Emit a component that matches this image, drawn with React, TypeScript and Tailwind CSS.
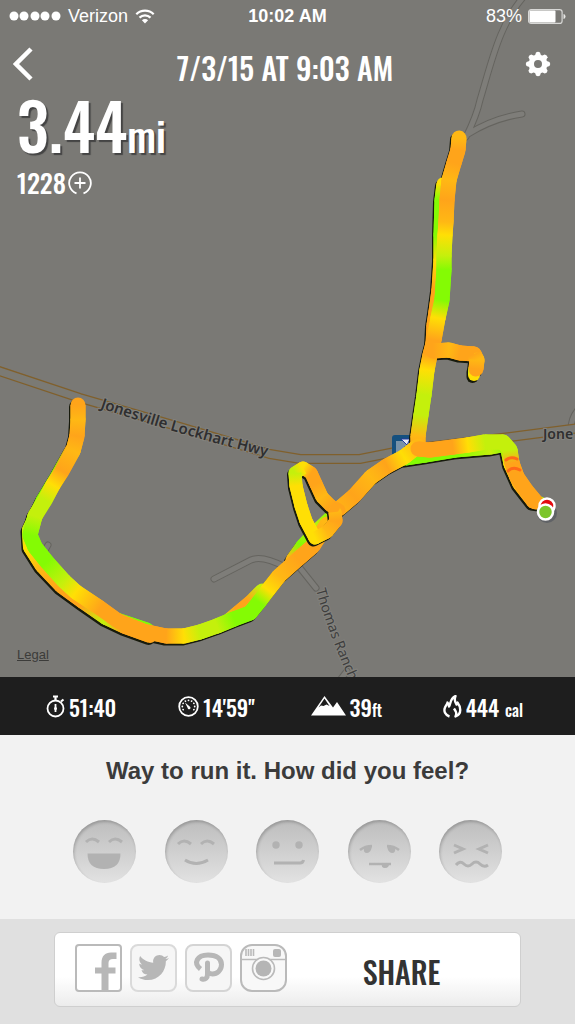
import { FaTwitter } from "react-icons/fa";
import type { ReactNode } from "react";

const CONDENSED = "font-['Oswald','Liberation_Sans_Narrow','Roboto_Condensed','Open_Sans_Condensed','DejaVu_Sans_Condensed',sans-serif]";

const O = "#ffa41a";
const A = "#ffb814";
const Y = "#ffdf05";
const L = "#c4f00c";
const G = "#84fb04";

type Point = [number, number, string];

type Track = { width: number; shadow?: boolean; points: Point[] };

const outbound: Track[] = [
  {
    width: 13,
    shadow: true,
    points: [[443, 184, Y], [441, 200, G], [440, 235, G], [440, 260, Y], [438, 290, O], [435, 312, O], [433, 325, O], [432, 345, O], [427, 368, A]],
  },
  { width: 12, shadow: true, points: [[474, 370, L], [474, 375, Y]] },
  {
    width: 13,
    shadow: true,
    points: [[405, 459, G], [425, 456, G], [455, 451, G], [490, 448, L], [506, 445, G], [510, 464, Y], [519, 484, A], [533, 502, O], [540, 503, L]],
  },
  {
    width: 14,
    shadow: true,
    points: [[72, 450, O], [58, 475, G], [43, 500, G], [29, 530, L], [30, 547, Y], [42, 566, A], [61, 586, O], [83, 602, O], [106, 618, L], [125, 627, O], [150, 636, O]],
  },
  { width: 12, points: [[118, 619, G], [148, 629, G]] },
  { width: 13, shadow: true, points: [[225, 623, L], [238, 612, O], [250, 602, O], [262, 590, L]] },
  { width: 13, shadow: true, points: [[334, 514, G], [317, 530, L], [302, 546, G], [292, 560, A]] },
];

const inbound: Track[] = [
  {
    width: 15,
    shadow: true,
    points: [[459, 138, A], [458, 150, O], [454, 163, O], [449, 180, A], [447, 200, O], [446, 222, A], [445, 235, Y], [444, 256, L], [444, 270, G], [442, 300, G], [438, 318, Y], [434, 340, O], [430, 355, O], [427, 370, Y], [424, 395, L], [421, 415, L], [418, 436, A], [418, 447, O]],
  },
  {
    width: 15,
    shadow: true,
    points: [[433, 351, O], [449, 350, A], [460, 353, O], [474, 354, O], [477, 360, A], [476, 369, O]],
  },
  {
    width: 15,
    shadow: true,
    points: [[334, 513, A], [354, 496, O], [371, 477, A], [387, 466, O], [404, 457, Y], [418, 446, A]],
  },
  {
    width: 15,
    points: [[418, 449, O], [430, 450, O], [453, 447, O], [468, 445, Y], [485, 442, L], [503, 442, L], [510, 450, L], [512, 463, O], [517, 477, O], [526, 490, O], [536, 502, O]],
  },
  {
    width: 15,
    shadow: true,
    points: [[327, 524, A], [313, 546, O], [298, 559, O], [279, 576, A], [268, 590, Y], [259, 602, G], [250, 613, G], [234, 619, G], [217, 626, L], [200, 632, L], [184, 636, Y], [166, 636, O], [143, 631, O], [118, 621, O], [100, 608, O], [76, 592, Y], [64, 581, L], [47, 562, G], [35, 547, G], [30, 535, G], [35, 516, L], [45, 500, L], [53, 485, Y], [62, 471, O], [73, 451, A], [77, 436, O], [78, 420, A], [78, 405, O]],
  },
];

const sideLoop: Track[] = [
  {
    width: 13,
    shadow: true,
    points: [[339, 510, O], [331, 506, O], [322, 497, A], [316, 484, O], [311, 473, O], [303, 468, Y], [295, 473, L], [296, 486, Y], [301, 506, Y], [306, 521, Y], [315, 538, Y], [327, 532, A], [336, 521, O], [335, 512, A]],
  },
];

function TrackGroup({ name, tracks }: { name: string; tracks: Track[] }) {
  return (
    <g>
      {tracks
        .filter((track) => track.shadow)
        .map((track, t) => (
          <polyline
            key={t}
            points={track.points.map(([x, y]) => `${x - 1.5},${y + 2}`).join(" ")}
            stroke="#171a0c"
            strokeWidth={track.width}
          />
        ))}
      {tracks.map((track, t) => {
        const legs = track.points.slice(1).map(([x, y, color], i) => {
          const [px, py, previous] = track.points[i];
          return { id: `${name}-${t}-${i}`, x, y, px, py, color, previous };
        });
        return (
          <g key={t}>
            {legs.map(({ id, x, y, px, py, color, previous }) => (
              <g key={id}>
                <linearGradient id={id} gradientUnits="userSpaceOnUse" x1={px} y1={py} x2={x} y2={y}>
                  <stop offset="0" stopColor={previous} />
                  <stop offset="1" stopColor={color} />
                </linearGradient>
                <path d={`M${px} ${py}L${x} ${y}`} stroke={`url(#${id})`} strokeWidth={track.width} />
              </g>
            ))}
            {legs.map(({ id, x, y, px, py }) => (
              <path
                key={id}
                d={`M${px} ${py}L${x} ${y}`}
                stroke={`url(#${id})`}
                strokeWidth={track.width}
                strokeLinecap="butt"
              />
            ))}
          </g>
        );
      })}
    </g>
  );
}

function Route() {
  return (
    <g fill="none" strokeLinecap="round" strokeLinejoin="round">
      <TrackGroup name="route" tracks={[...outbound, ...inbound]} />
      <TrackGroup name="loop" tracks={sideLoop} />
      <path d="M506 460q5-4 11-1M508 471q5-5 12-1" stroke="#ff6a18" strokeWidth="3" />
    </g>
  );
}

const lanes = [
  "M526-6C500 22 492 60 480 100C477 114 473 123 466 137",
  "M468 134Q494 118 522 114",
  "M214 579L251 560Q262 555 285 567M300 568L316 588",
  "M43 554L48 545",
  "M337 684L347 671",
  "M578 410Q571 418 571 430",
];

function RouteMap() {
  return (
    <svg
      className="absolute inset-0 h-full w-full"
      viewBox="0 0 575 677"
      preserveAspectRatio="xMidYMid slice"
      role="img"
      aria-label="Map of the run"
    >
      <defs>
        <path id="highway-label" d="M100 408Q185 437 290 462" />
        <path id="ranch-label" d="M316 590Q326 628 358 700" />
      </defs>
      <g fill="none" strokeLinecap="round">
        <path d={lanes.join("")} stroke="#65645f" strokeWidth="7" />
        <path d={lanes.join("")} stroke="#7e7d79" strokeWidth="5" />
      </g>
      <g fill="none">
        <path d="M-4 370L80 398L180 427L270 454L300 459H360L410 449L510 437L580 428" stroke="#80602c" strokeWidth="10" />
        <path d="M-4 370L80 398L180 427L270 454L300 459H360L410 449L510 437L580 428" stroke="#7b7a74" strokeWidth="7.500" />
      </g>
      <rect x="392" y="435" width="30" height="28" rx="3" fill="#15507f" />
      <path d="M396 441h16v20h-16z" fill="#7892a8" />
      <path d="M401 439h9l-3 6zM405 446v7" fill="#e8ecf4" stroke="#2439a0" />
      <g className="font-['Noto_Sans',sans-serif]" stroke="#83827d" strokeWidth="2" paintOrder="stroke">
        <text fontSize="15" fontWeight="600" fill="#2f2f30">
          <textPath href="#highway-label">Jonesville Lockhart Hwy</textPath>
        </text>
        <text x="543" y="439" fontSize="14" fontWeight="600" fill="#2f2f30">
          Jone
        </text>
        <text fontSize="14" fill="#3e3e3d">
          <textPath href="#ranch-label">Thomas Ranch</textPath>
        </text>
      </g>
      <Route />
      <circle cx="547" cy="513" r="10" fill="#30384a" opacity=".35" />
      <circle cx="547" cy="506" r="7.500" fill="#e30b10" stroke="#fff" strokeWidth="2.500" />
      <circle cx="545.500" cy="512" r="7.500" fill="#7cc52b" stroke="#fff" strokeWidth="2.500" />
    </svg>
  );
}

function StatusBar() {
  return (
    <div className="grid h-8 grid-cols-3 items-center px-[9px] text-lg font-['Liberation_Sans',sans-serif]">
      <div className="flex items-center gap-[7px]">
        <svg width="52" height="10" viewBox="0 0 52 10" fill="#fff" aria-hidden="true">
          {[5, 15, 26, 36, 47].map((x) => (
            <circle key={x} cx={x} cy="5" r="4.500" />
          ))}
        </svg>
        <span>Verizon</span>
        <svg width="20" height="15" viewBox="0 0 19 15" fill="none" stroke="#fff" strokeWidth="2.200" aria-hidden="true">
          <path d="M.8 5.300a12.300 12.300 0 0 1 17.400 0M4 8.600a7.800 7.800 0 0 1 11 0" />
          <path d="M9.500 14.500L6.400 11.300a4.400 4.400 0 0 1 6.200 0z" fill="#fff" stroke="none" />
        </svg>
      </div>
      <div className="text-center font-bold">10:02 AM</div>
      <div className="flex items-center justify-end gap-[6px]">
        <span>83%</span>
        <svg width="38" height="15" viewBox="0 0 38 15" aria-hidden="true">
          <rect x=".6" y=".6" width="33.500" height="13.800" rx="2.500" fill="none" stroke="#d8d8d6" strokeWidth="1.200" />
          <rect x="1.500" y="1.500" width="26" height="12" rx="1" fill="#fff" />
          <path d="M35.500 5q2 .4 2 2.500t-2 2.500z" fill="#e8e8e6" />
        </svg>
      </div>
    </div>
  );
}

function GearIcon() {
  return (
    <svg width="26" height="26" viewBox="-13 -13 26 26" aria-hidden="true">
      <circle r="6.700" fill="none" stroke="#fff" strokeWidth="5.400" />
      {[0, 45, 90, 135, 180, 225, 270, 315].map((angle) => (
        <path key={angle} transform={`rotate(${angle})`} d="M-3.200-8L-2-11.500Q0-13 2-11.500L3.200-8z" fill="#fff" />
      ))}
    </svg>
  );
}

function Stat({ icon, value, unit }: { icon: ReactNode; value: string; unit?: ReactNode }) {
  return (
    <li className="flex items-center gap-1">
      {icon}
      <span className="whitespace-nowrap pt-[2px] text-[22px] leading-7">
        {value}
        {unit}
      </span>
    </li>
  );
}

const ticks = [-120, -90, -60, -30, 0, 30, 60, 90, 120];

function Stats() {
  return (
    <ul className={`grid h-[58px] grid-cols-4 items-center bg-[#1e1e1e] pl-[46px] font-medium text-white ${CONDENSED}`}>
      <Stat
        value="51:40"
        icon={
          <svg width="19" height="23" viewBox="0 0 19 23" fill="none" stroke="#fff" strokeWidth="1.800" aria-hidden="true">
            <circle cx="9.500" cy="13.500" r="8" />
            <path d="M7 1.500h5M9.500 1.500v4M15 6.500l2.500-2" strokeWidth="2.200" />
            <path d="M9.500 9v8" />
            <circle cx="9.500" cy="13.500" r="1.500" fill="#fff" stroke="none" />
          </svg>
        }
      />
      <Stat
        value={"14'59''"}
        icon={
          <svg width="21" height="21" viewBox="-10.500 -10.500 21 21" aria-hidden="true">
            <circle r="9.300" fill="none" stroke="#fff" strokeWidth="1.800" />
            {ticks.map((angle) => (
              <circle key={angle} transform={`rotate(${angle})`} cy="-6.200" r=".9" fill="#fff" />
            ))}
            <path d="M-3.500-4L-.8 1.500a1.400 1.400 0 1 0 2-1.400z" fill="#fff" />
          </svg>
        }
      />
      <Stat
        value="39"
        unit={<span className="text-base">ft</span>}
        icon={
          <svg width="35" height="20" viewBox="0 0 35 20" aria-hidden="true">
            <path d="M0 19.500L13.500 0L22 11.500L26 6L35 19.500z" fill="#fff" />
            <path d="M13.500 2.500L18.500 10L15.500 8.500L12.500 10L10 9.500L7.500 11.500z" fill="#1e1e1e" />
          </svg>
        }
      />
      <Stat
        value="444"
        unit={<span className="ml-[6px] text-base">cal</span>}
        icon={
          <svg width="19" height="23" viewBox="0 0 19 23" fill="none" stroke="#fff" strokeWidth="2.400" strokeLinejoin="round" aria-hidden="true">
            <path d="M6.500 21.500C2 20 .5 16 2 12.500C2.800 10.500 4.500 9 4.500 7.500C6 9 6 10.500 6 11.500C8 9 6.500 4 12.500 1C11 5 12 7.500 13.500 9.500L14.500 7.500C17.500 11.500 19.500 18.500 12.500 21.500C14 18 13 16.500 11 13.500" />
          </svg>
        }
      />
    </ul>
  );
}

const faces: { label: string; drawing: ReactNode }[] = [
  {
    label: "Great",
    drawing: (
      <>
        <path d="M13 22q6-6 13 0M36 22q6-6 13 0" />
        <path d="M14.500 33.500h33q0 15.500-16.500 15.500t-16.500-15.500z" fill="#b2b2b2" stroke="none" />
      </>
    ),
  },
  { label: "Good", drawing: <path d="M13 24q6-6 13 0M36 24q6-6 13 0M20 40q11 7 23 0" /> },
  {
    label: "So-so",
    drawing: (
      <>
        <path d="M18 43h26q3 0 3.500-3" />
        <circle cx="20" cy="25" r="3.700" fill="#b2b2b2" stroke="none" />
        <circle cx="43" cy="25" r="3.700" fill="#b2b2b2" stroke="none" />
      </>
    ),
  },
  {
    label: "Tired",
    drawing: (
      <>
        <path d="M12 30q5-4 12-4M51 30q-5-4-12-4M21 44h22" strokeWidth="2.500" />
        <path d="M16 28l8-2q-1 7-5 7t-3-5zM47 28l-8-2q1 7 5 7t3-5zM34 44h7q0 4-4 4t-3-4z" fill="#b2b2b2" stroke="none" />
      </>
    ),
  },
  {
    label: "Hurting",
    drawing: <path d="M15 25l9 4l-9 4M49 25l-9 4l9 4M17 45q4-5 8-1t8 0t8 0t8 1" />,
  },
];

function Feelings() {
  return (
    <section className="flex h-[184px] flex-col bg-[#f2f2f2] px-[73px] pt-5">
      <h2 className="whitespace-nowrap text-center text-[24px] font-bold leading-8 text-[#3b3b3b] font-['Liberation_Sans',sans-serif]">
        Way to run it. How did you feel?
      </h2>
      <div className="mt-[33px] flex justify-between">
        {faces.map(({ label, drawing }) => (
          <button
            key={label}
            type="button"
            aria-label={label}
            className="h-[63px] w-[63px] shrink-0 rounded-full bg-linear-to-b from-[#bdbdbd] to-[#e2e2e2] shadow-[inset_1px_2px_3px_rgba(0,0,0,0.2)]"
          >
            <svg className="h-full w-full" viewBox="0 0 63 63" fill="none" stroke="#b2b2b2" strokeWidth="3" aria-hidden="true">
              {drawing}
            </svg>
          </button>
        ))}
      </div>
    </section>
  );
}

const tile = "flex h-12 w-[47px] shrink-0 items-center justify-center overflow-hidden border-2 text-[#b7b7b7]";

function ShareBar() {
  return (
    <section className="bg-[#e0e0e0] px-[54px] pb-[17px] pt-[13px]">
      <div className="flex h-[75px] items-center gap-2 rounded-md border border-[#cfcfcf] bg-linear-to-b from-white from-60% to-[#ececec] pb-1 pl-[20px]">
        <button type="button" aria-label="Facebook" className={`${tile} rounded border-[#bababa] bg-white`}>
          <svg className="h-full w-full" viewBox="0 0 43 44" aria-hidden="true">
            <path d="M24.500 44V27.500H18V21.500H24.500V17C24.500 10 28 6.500 34 6.500H39.500V13H36C33 13 31.500 14.300 31.500 17V21.500H38.500V27.500H31.500V44z" fill="#b7b7b7" />
          </svg>
        </button>
        <button type="button" aria-label="Twitter" className={`${tile} rounded-lg border-[#dadada] bg-[#f6f6f6]`}>
          <FaTwitter size={31} />
        </button>
        <button type="button" aria-label="Pinterest" className={`${tile} rounded-lg border-[#d4d4d4] bg-[#f6f6f6]`}>
          <svg className="h-full w-full" viewBox="0 0 43 44" fill="none" stroke="currentColor" aria-hidden="true">
            <path d="M13.500 23C6 17 10 9 21 9C30 9 34.500 13 34.500 18.500C34.500 24.500 30 28 25.500 28C23 28 21 27 20.500 25" strokeWidth="5" />
            <path d="M20.500 17V28Q20.500 34 15 33" strokeWidth="5" strokeLinecap="round" />
          </svg>
        </button>
        <button type="button" aria-label="Instagram" className={`${tile} rounded-xl border-[#bababa] bg-[#f8f8f8]`}>
          <svg className="h-full w-full" viewBox="0 0 43 44" aria-hidden="true">
            <path d="M0 13.500H43" stroke="#bababa" strokeWidth="1.500" />
            <path d="M4 3v7M6.500 3v7M9 3v7M11.500 3v7" stroke="#bababa" strokeWidth="1.600" />
            <rect x="31" y="3" width="8" height="8" rx="2" fill="#b7b7b7" />
            <circle cx="21.500" cy="22.500" r="11" fill="#f8f8f8" stroke="#bababa" strokeWidth="1.600" />
            <circle cx="21.500" cy="22.500" r="8" fill="#b5b5b5" />
          </svg>
        </button>
        <button type="button" className={`h-full flex-1 pr-3 pt-2 text-[30px] font-medium text-[#333] ${CONDENSED}`}>
          SHARE
        </button>
      </div>
    </section>
  );
}

export default function App() {
  return (
    <main className="flex min-h-screen flex-col bg-[#e0e0e0]">
      <section className="relative flex flex-1 flex-col overflow-hidden bg-[#7a7975] text-white">
        <RouteMap />
        <div className="relative flex flex-1 flex-col">
          <StatusBar />
          <header className="flex h-16 items-center justify-between pl-[13px] pr-[24px]">
            <button type="button" aria-label="Back" className="w-8 shrink-0">
              <svg width="20" height="34" viewBox="0 0 20 34" fill="none" stroke="#fff" strokeWidth="4.500" aria-hidden="true">
                <path d="M18 2L3 17L18 32" />
              </svg>
            </button>
            <h1 className={`whitespace-nowrap pt-2 text-[30px] font-medium leading-9 ${CONDENSED}`}>7/3/15 AT 9:03 AM</h1>
            <button type="button" aria-label="Settings" className="shrink-0">
              <GearIcon />
            </button>
          </header>
          <div className={`pl-[17px] font-medium ${CONDENSED}`}>
            <p className="text-[64px] leading-[56px] [text-shadow:2px_2px_1px_#444]">
              3.44<span className="text-[40px] leading-none">mi</span>
            </p>
            <p className="mt-3 flex items-center gap-[2px] text-[26px] leading-8">
              1228
              <svg width="24" height="24" viewBox="0 0 24 24" fill="none" stroke="#fff" strokeWidth="1.800" aria-label="Fuel" role="img">
                <path d="M8.500 22.300A10.800 10.800 0 1 1 15.500 22.300M12 6.500v11M6.500 12h11" />
              </svg>
            </p>
          </div>
          <a href="#legal" className="mb-[14px] ml-[17px] mt-auto self-start text-[13px] leading-4 text-[#3c3c3a] underline font-['Liberation_Sans',sans-serif]">
            Legal
          </a>
        </div>
      </section>
      <Stats />
      <Feelings />
      <ShareBar />
    </main>
  );
}
